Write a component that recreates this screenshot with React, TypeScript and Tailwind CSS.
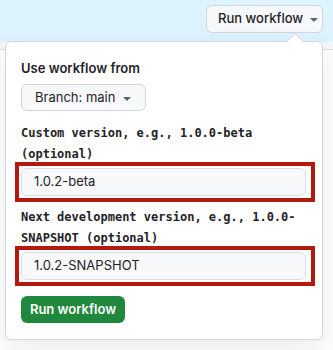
const Caret = ({ className = "" }: { className?: string }) => (
  <svg viewBox="0 0 16 16" width="16" height="16" fill="currentColor" className={className}>
    <path d="m4.427 7.427 3.396 3.396a.25.25 0 0 0 .354 0l3.396-3.396A.25.25 0 0 0 11.396 7H4.604a.25.25 0 0 0-.177.427Z" />
  </svg>
);

const VersionField = ({ label, value }: { label: React.ReactNode; value: string }) => (
  <>
    <p className="mt-[5px] font-['DejaVu_Sans_Mono',monospace] text-[12px] font-bold leading-[21px] text-[#1f2328]">
      {label}
    </p>
    <div className="-ml-[6px] -mr-[8px] -mt-[3px] border-4 border-[#b3190c] bg-white py-[2px] pl-[2px] pr-[5px]">
      <div className="flex h-[28px] items-center rounded-md border border-[#d8dee4] bg-[#f6f8fa] px-[12px] text-[13px] text-[#1f2328]">
        {value}
      </div>
    </div>
  </>
);

const App = () => {
  return (
    <div className="relative h-[350px] w-[333px] overflow-hidden bg-white font-['Inter','Liberation_Sans',sans-serif]">
      <div className="flex h-[42px] justify-end bg-[#ddf4ff] pr-[10px] pt-[5px]">
        <button className="flex h-[28px] w-[117px] items-center gap-[3px] whitespace-nowrap rounded-md border border-[#d0d7de] bg-[#f6f8fa] pl-[11px] text-[13px] font-medium text-[#1f2328]">
          Run workflow
          <Caret className="text-[#59636e]" />
        </button>
      </div>
      <div className="h-[8px] border-b border-[#d8dee4] bg-[#f6f8fa]" />

      <div className="absolute left-[5px] top-[41px] w-[318px] rounded-md border border-[#d0d7de] bg-white px-[15px] pb-[16px] pt-[16px] shadow-[0_8px_24px_rgba(140,149,159,0.2)]">
        <div className="absolute -top-[7px] left-[283px] h-[12px] w-[12px] rotate-45 border-l border-t border-[#d0d7de] bg-white" />
        <p className="text-[13px] font-semibold leading-[20px] text-[#1f2328]">Use workflow from</p>
        <button className="mt-[6px] flex h-[27px] items-center gap-[4px] whitespace-nowrap rounded-md border border-[#d0d7de] bg-[#f6f8fa] pl-[13px] pr-[10px] text-[13px] text-[#1f2328]">
          Branch: main
          <Caret className="text-[#59636e]" />
        </button>
        <div className="mt-[12px]" />
        <VersionField label="Custom version, e.g., 1.0.0-beta (optional)" value="1.0.2-beta" />
        <VersionField label="Next development version, e.g., 1.0.0-SNAPSHOT (optional)" value="1.0.2-SNAPSHOT" />
        <button className="mt-[10px] flex h-[27px] w-[104px] items-center justify-center whitespace-nowrap rounded-md bg-[#1f883d] text-[13px] font-semibold text-white">
          Run workflow
        </button>
      </div>
    </div>
  );
};

export default App;
